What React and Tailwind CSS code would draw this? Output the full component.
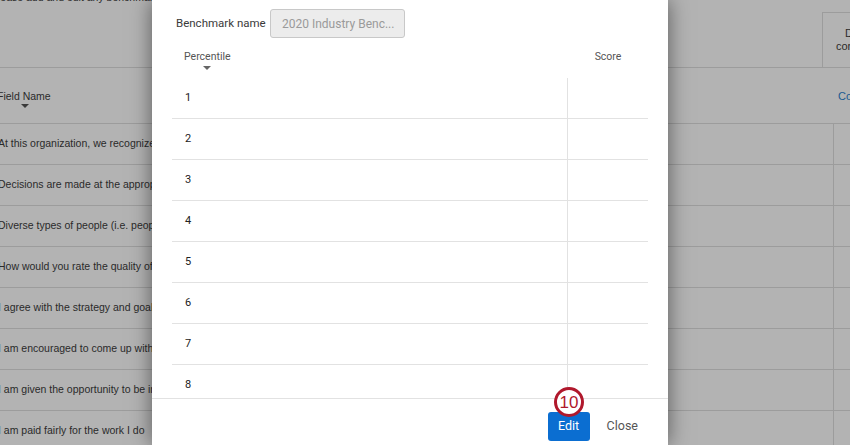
import React from "react";

const rows = [
  "At this organization, we recognize people for their contributions",
  "Decisions are made at the appropriate level",
  "Diverse types of people (i.e. people of different backgrounds)",
  "How would you rate the quality of communication",
  "I agree with the strategy and goals of the organization",
  "I am encouraged to come up with new ideas",
  "I am given the opportunity to be innovative",
  "I am paid fairly for the work I do",
];

const pct = [1, 2, 3, 4, 5, 6, 7, 8];

export default function App() {
  return (
    <div className="relative w-[850px] h-[445px] overflow-hidden bg-[#b3b3b3] font-['Liberation_Sans',Arial,sans-serif] text-[#2a2a2a]">
      {/* background page */}
      <div className="flex flex-col">
        <div className="h-[67px] flex">
          <div className="flex-1 ml-[-9px] mt-[-9px] text-[10.5px] leading-[13px] whitespace-nowrap">
            Please add and edit any benchmark data below
          </div>
          <div className="mt-[12px] w-[28px] h-[55px] border-l border-t border-[#9c9c9c] flex flex-col items-start pt-[14px] pl-[13px] text-[11px] leading-[13px] whitespace-nowrap overflow-hidden">
            <span className="ml-[9px]">D</span>
            <span>cor</span>
          </div>
        </div>
        <div className="h-[57px] border-t border-[#9c9c9c] border-b flex items-center pt-[6px]">
          <div className="flex-1 ml-[-3px] flex">
            <div className="flex flex-col items-center">
              <span className="text-[10.5px] leading-[13px] whitespace-nowrap">Field Name</span>
              <span className="mt-[1px] ml-[2px] w-0 h-0 border-l-[4px] border-r-[4px] border-t-[4px] border-l-transparent border-r-transparent border-t-[#3a3a3a]"></span>
            </div>
          </div>
          <div className="w-[12px] text-[11px] text-[#1a5a91] whitespace-nowrap overflow-hidden mb-[5px]">Co</div>
        </div>
        {rows.map((r) => (
          <div key={r} className="h-[41px] border-b border-[#9c9c9c] flex">
            <div className="w-[836px] border-r border-[#9c9c9c] flex items-center ml-[-2px] text-[10.5px] whitespace-nowrap overflow-hidden">
              {r}
            </div>
            <div className="flex-1"></div>
          </div>
        ))}
      </div>

      {/* modal */}
      <div className="absolute left-[152px] top-0 w-[516px] h-[445px] bg-white shadow-[0_0_20px_rgba(0,0,0,0.5)] flex flex-col font-['Roboto','Noto_Sans',sans-serif]">
        <div className="flex items-center pl-[24px] pt-[6px] h-[35px] box-content">
          <span className="text-[11.5px] text-[#3a3a3a] w-[94px] whitespace-nowrap">Benchmark name</span>
          <div className="w-[135px] h-[29px] rounded-[3px] border border-[#c8c8c8] bg-[#ececec] flex items-center pl-[11px] text-[12px] text-[#9a9a9a] whitespace-nowrap">
            2020 Industry Benc...
          </div>
        </div>
        <div className="mx-[20px] flex h-[32px] mt-[5px]">
          <div className="w-[396px] flex flex-col items-start pl-[12px] pt-[4px]">
            <span className="text-[10.5px] leading-[14px] text-[#555]">Percentile</span>
            <span className="ml-[19px] mt-[2px] w-0 h-0 border-l-[4px] border-r-[4px] border-t-[4px] border-l-transparent border-r-transparent border-t-[#666]"></span>
          </div>
          <div className="flex-1 flex justify-center pt-[4px]">
            <span className="text-[10.5px] leading-[14px] text-[#555]">Score</span>
          </div>
        </div>
        <div className="mx-[20px] h-[320px] overflow-hidden">
          {pct.map((p) => (
            <div key={p} className="flex h-[41px] border-b border-[#e2e2e2]">
              <div className="w-[396px] border-r border-[#e2e2e2] flex items-center pl-[13px] text-[11px] text-[#222]">
                {p}
              </div>
              <div className="flex-1"></div>
            </div>
          ))}
        </div>
        <div className="flex-1 border-t border-[#e2e2e2] relative flex items-start justify-end pr-[19px] pt-[13px]">
          <button className="w-[42px] h-[29px] rounded-[3px] bg-[#0b6ed1] text-white text-[12.5px] flex items-center justify-center">
            Edit
          </button>
          <button className="ml-[6px] h-[29px] px-[11px] text-[12.5px] text-[#555] flex items-center">Close</button>
          <div className="absolute left-[402px] top-[-12px] w-[30px] h-[30px] rounded-full bg-white border-[3px] border-[#b0182c] flex items-center justify-center text-[#b0182c] text-[17px] leading-none font-['Liberation_Sans',Arial,sans-serif]">
            10
          </div>
        </div>
      </div>
    </div>
  );
}
